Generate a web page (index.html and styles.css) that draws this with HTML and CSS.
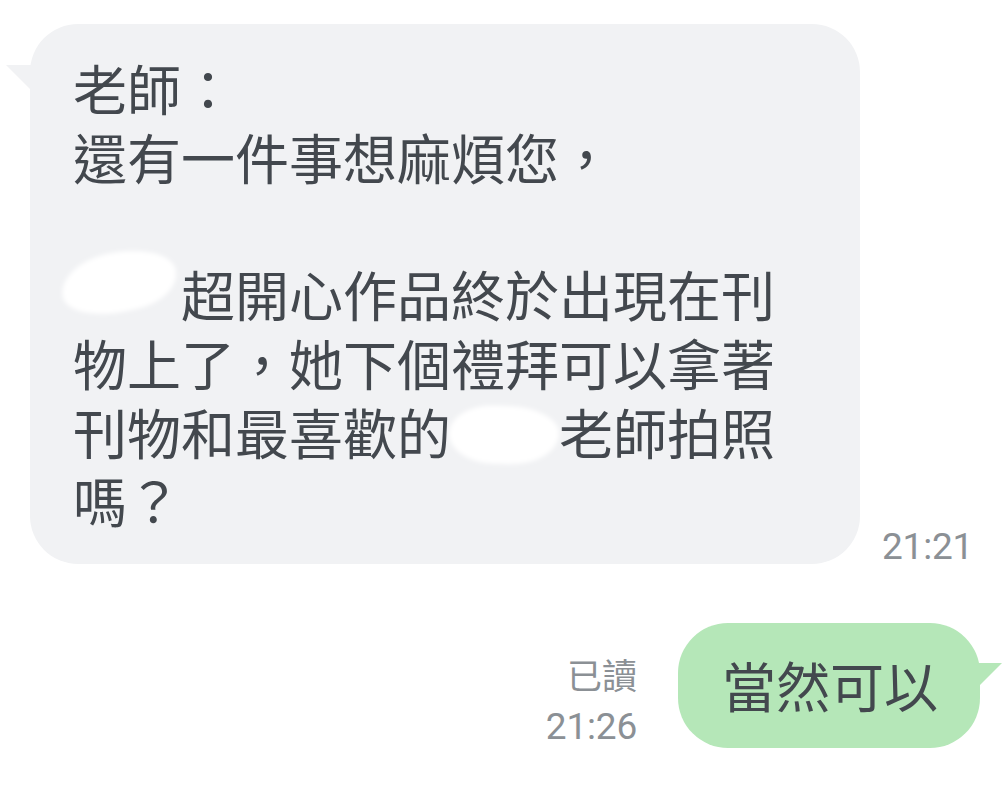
FILE: index.html
```html
<!DOCTYPE html>
<html lang="zh-Hant">
<head>
<meta charset="utf-8">
<title>Chat</title>
<link rel="stylesheet" href="styles.css">
</head>
<body>
<div class="chat">
  <div class="row row-in">
    <div class="bubble bubble-in">
      <p class="msg">老師：<br>還有一件事想麻煩您，<br><br><span class="redact r1"></span>超開心作品終於出現在刊<br>物上了，她下個禮拜可以拿著<br>刊物和最喜歡的<span class="redact r2"></span>老師拍照<br>嗎？</p>
    </div>
    <div class="time time-in">21:21</div>
  </div>
  <div class="row row-out">
    <div class="meta">
      <div class="read">已讀</div>
      <div class="time">21:26</div>
    </div>
    <div class="bubble bubble-out">
      <p class="msg msg-out">當然可以</p>
    </div>
  </div>
</div>
</body>
</html>
```

FILE: styles.css
```css
html, body {
  margin: 0;
  padding: 0;
  background: #ffffff;
}
body {
  width: 1008px;
  height: 807px;
  overflow: hidden;
  font-family: "Noto Sans CJK TC", "Noto Sans", sans-serif;
}
.chat {
  display: flex;
  flex-direction: column;
}
.row {
  display: flex;
  align-items: flex-end;
}
.row-in {
  margin-top: 24px;
  padding-left: 30px;
  gap: 22px;
}
.row-out {
  justify-content: flex-end;
  align-items: flex-start;
  margin-top: 59px;
  padding-right: 28px;
  gap: 41px;
}
.bubble {
  position: relative;
  box-sizing: border-box;
}
.bubble-in {
  width: 830px;
  background: #f1f2f4;
  border-radius: 48px;
  padding: 30px 0 29px 43px;
}
.bubble-in::before {
  content: "";
  position: absolute;
  left: -24px;
  top: 41px;
  width: 26px;
  height: 26px;
  background: #f1f2f4;
  clip-path: polygon(0 0, 100% 0, 100% 100%);
}
.bubble-out {
  height: 125px;
  background: #b5e7b8;
  border-radius: 50px;
  padding: 0 42px 0 44px;
  display: flex;
  align-items: center;
}
.bubble-out::after {
  content: "";
  position: absolute;
  right: -22px;
  top: 40px;
  width: 26px;
  height: 26px;
  background: #b5e7b8;
  clip-path: polygon(0 0, 100% 0, 0 100%);
}
.msg {
  margin: 0;
  font-size: 54px;
  line-height: 68.7px;
  color: #43484e;
  white-space: nowrap;
}
.msg-out {
  font-size: 54px;
  line-height: 60px;
}
.redact {
  display: inline-block;
  width: 2em;
  height: 1em;
  position: relative;
  vertical-align: top;
}
.redact::after {
  content: "";
  position: absolute;
  background: #ffffff;
  filter: blur(2px);
}
.r1::after {
  left: -12px;
  top: -8px;
  width: 116px;
  height: 60px;
  border-radius: 45% 55% 40% 50% / 55% 50% 50% 45%;
  transform: rotate(-12deg);
}
.r2::after {
  left: -2px;
  top: 8px;
  width: 110px;
  height: 58px;
  border-radius: 40% 45% 45% 40% / 50% 45% 55% 50%;
  transform: rotate(2deg);
}
.time {
  font-family: Roboto, "Liberation Sans", sans-serif;
  font-size: 37px;
  letter-spacing: -0.2px;
  color: #8b9095;
  line-height: 53px;
}
.time-in {
  margin-bottom: -9px;
}
.meta {
  display: flex;
  flex-direction: column;
  align-items: flex-end;
  margin-top: 24px;
}
.read {
  font-size: 35px;
  line-height: 53px;
  color: #8b9095;
}
```
